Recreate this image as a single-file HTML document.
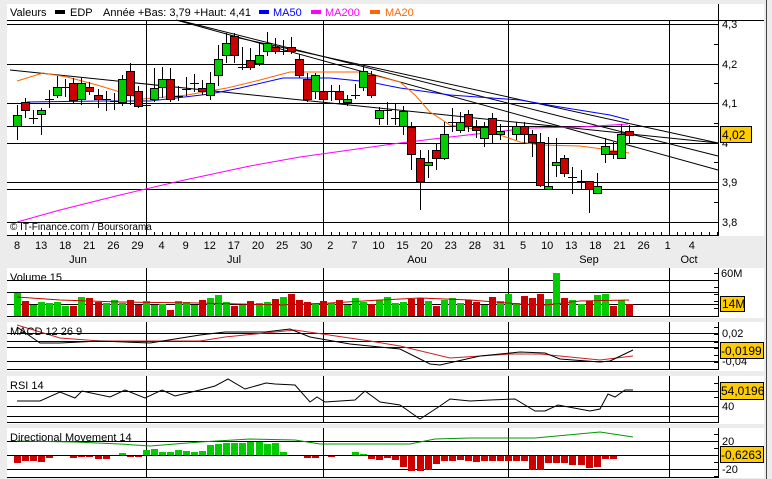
<!DOCTYPE html>
<html><head><meta charset="utf-8">
<style>
html,body{margin:0;padding:0;background:#ececec;}
body{width:772px;height:479px;overflow:hidden;position:relative;font-family:"Liberation Sans",sans-serif;}
svg{position:absolute;left:0;top:0;}
text{font-family:"Liberation Sans",sans-serif;font-size:11px;fill:#000;}
</style></head><body>
<svg id="s" width="772" height="479" viewBox="0 0 772 479" xmlns="http://www.w3.org/2000/svg" shape-rendering="crispEdges">
<rect x="0" y="0" width="772" height="479" fill="#ececec"/>
<line x1="766.5" y1="0" x2="766.5" y2="479" stroke="#444"/>
<rect x="7" y="4" width="757" height="232" fill="#fff"/>
<rect x="7" y="268" width="757" height="50" fill="#fff"/>
<rect x="7" y="322" width="757" height="49" fill="#fff"/>
<rect x="7" y="376" width="757" height="48" fill="#fff"/>
<rect x="7" y="428" width="757" height="50" fill="#fff"/>
<g id="grid" stroke="#e2e2e2" stroke-width="1"></g>
<g id="main"></g>
<text x="10" y="16">Valeurs</text>
<rect x="55" y="10" width="10" height="4" fill="#000"/><text x="70" y="16">EDP</text>
<text x="103" y="16">Année +Bas: 3,79 +Haut: 4,41</text>
<rect x="259" y="10" width="10" height="4" fill="#0000ff"/><text x="273" y="16" style="fill:#0000ff">MA50</text>
<rect x="311" y="10" width="10" height="4" fill="#ff00ff"/><text x="325" y="16" style="fill:#ff00ff">MA200</text>
<rect x="370" y="10" width="10" height="4" fill="#ff6600"/><text x="385" y="16" style="fill:#ff6600">MA20</text>
<text x="10" y="230" style="font-size:10px">© IT-Finance.com / Boursorama</text>
<text x="10" y="281">Volume 15</text>
<text x="10" y="335">MACD 12 26 9</text>
<text x="10" y="389">RSI 14</text>
<text x="10" y="441">Directional Movement 14</text>
<g id="labels"></g>
</svg>
<script>
var NS="http://www.w3.org/2000/svg";
function el(p,t,a){var e=document.createElementNS(NS,t);for(var k in a)e.setAttribute(k,a[k]);document.getElementById(p).appendChild(e);return e;}
function line(p,x1,y1,x2,y2,c,w){return el(p,'line',{x1:x1,y1:y1,x2:x2,y2:y2,stroke:c||'#000','stroke-width':w||1});}
function poly(p,pts,c){el(p,'polyline',{points:pts.map(function(q){return q.join(',')}).join(' '),fill:'none',stroke:c,'stroke-width':1,'shape-rendering':'auto'});}
function txt(p,x,y,s,extra){var t=el(p,'text',Object.assign({x:x,y:y},extra||{}));t.textContent=s;return t;}
function X(i){return 17+8.05*i;}
[146,323,508,669].forEach(function(x){[[20,236],[268,316],[322,370],[376,422],[428,477]].forEach(function(r){line('grid',x+.5,r[0],x+.5,r[1]);});});
[24,64,103,143,182,222].forEach(function(y){line('grid',7,y+.5,718,y+.5);});
[[280,292,304],[333,347,361],[391,406],[441,469]].forEach(function(a){a.forEach(function(y){line('grid',7,y+.5,718,y+.5);});});
line('main',7,20.5,764,20.5,'#000');
line('main',7,126.5,718,126.5,'#000');
line('main',7,189.5,718,189.5,'#000');
el('main','g',{id:'tl','shape-rendering':'auto'});
line('tl',176,20,718,170,'#000');line('tl',182,21,718,156,'#000');line('tl',10,70,718,143,'#000');line('tl',230,36,718,143,'#000');
poly('main',[[17,222],[60,210],[120,195],[180,181],[250,166],[300,157],[350,150],[400,143],[450,137],[530,128],[580,127],[628,124]],'#ff00ff');
poly('main',[[27,102],[100,101],[150,101],[210,94],[240,88],[283,78],[330,78],[370,82],[400,88],[450,95],[520,100],[560,107],[610,115],[629,120]],'#0000ff');
poly('main',[[17,81],[43,73],[67,77],[97,85],[120,92],[143,99],[187,95],[227,88],[260,80],[290,72],[333,72],[360,72],[400,82],[415,95],[430,112],[450,125],[480,130],[500,135],[520,142],[540,145],[580,146],[610,150],[629,153]],'#ff6600');
var C=[['g',115,126,105,140],['r',102,110,98,118],['d',118,118,110,124],['g',110,114,108,135],['d',99,99,90,108],['g',87,95,76,98],['d',87,87,79,97],['r',83,100,78,103],['g',83,99,78,105],['r',87,91,82,95],['r',95,99,89,108],['d',99,99,91,111],['d',101,101,93,110],['g',79,102,75,106],['r',71,95,63,105],['r',91,106,86,108],['d',105,105,98,108],['g',88,99,68,102],['g',79,87,67,98],['r',79,99,68,102],['d',96,96,86,101],['d',89,89,77,96],['d',83,83,74,92],['r',88,91,80,95],['g',83,95,72,100],['g',59,75,45,86],['g',43,55,33,63],['r',36,55,33,63],['d',67,67,47,70],['r',60,67,48,70],['g',55,63,43,66],['g',43,51,32,56],['r',47,51,38,54],['d',51,51,40,55],['r',47,51,37,54],['r',59,75,54,78],['r',79,99,73,102],['g',75,91,73,99],['r',91,99,84,102],['d',91,91,85,101],['r',91,99,85,103],['g',99,102,95,106],['d',95,95,84,99],['g',71,87,66,91],['r',75,95,71,98],['g',110,118,107,125],['d',110,110,102,125],['d',118,118,104,125],['g',111,126,106,135],['r',127,154,122,170],['r',158,181,150,210],['g',162,165,150,178],['r',150,158,143,170],['g',134,158,122,160],['d',122,122,108,132],['g',122,130,112,133],['r',114,126,110,132],['r',127,130,120,138],['g',127,138,122,147],['r',118,134,113,143],['g',131,134,124,140],['d',126,126,121,133],['g',126,134,122,140],['r',126,134,122,144],['r',134,142,130,157],['r',142,185,133,187],['g',186,189,137,190],['g',162,165,138,177],['r',158,173,155,177],['d',177,177,167,194],['d',181,181,170,189],['r',181,189,181,213],['g',186,193,173,193],['g',146,154,138,163],['r',151,154,142,159],['g',134,158,124,159],['r',131,135,125,143]];
var GR='#00cc00',RD='#cc0000';
C.forEach(function(c,i){var x=Math.round(X(i));line('main',x+.5,c[3],x+.5,c[4],'#000');
 if(c[0]=='d'){line('main',x-4,c[1]+.5,x+5,c[1]+.5,'#000');}
 else el('main','rect',{x:x-3.5,y:c[1]+.5,width:8,height:Math.max(2,c[2]-c[1]),fill:c[0]=='g'?GR:RD,stroke:'#000'});});
line('main',718.5,4,718.5,236,'#000');
for(var y=24;y<=230;y+=19.75){line('main',714,Math.round(y)+.5,718,Math.round(y)+.5,'#000');}
[['4,3',24],['4,2',64],['4,1',103],['4',143],['3,9',182],['3,8',222]].forEach(function(a){txt('labels',722,a[1]+4,a[0]);});
el('labels','rect',{x:720.5,y:126.5,width:31,height:16,fill:'#ffcc00',stroke:'#000'});txt('labels',722,139,'4,02',{style:'font-size:12px'});
line('main',7,235.5,718,235.5,'#000');
for(var i=0;i<88;i++){var x=Math.round(X(i))+.5;if(x<718)line('main',x,232,x,236,'#000');}
var D=['8','13','18','21','26','29','4','9','12','17','20','25','30','2','7','10','15','20','23','28','31','5','10','13','18','21','26','1','4'];
D.forEach(function(d,i){txt('labels',17+24.1*i,249,d,{'text-anchor':'middle'});});
[['Jun',78],['Jul',234],['Aou',417],['Sep',589],['Oct',689]].forEach(function(a){txt('labels',a[1],263,a[0],{'text-anchor':'middle'});});
var V=[293,301,305,302,303,302,306,306,297,298,302,303,300,303,300,305,301,305,304,310,301,302,305,300,298,295,302,306,305,301,303,302,299,297,294,300,302,304,301,303,300,305,298,302,304,300,297,303,302,299,298,301,306,300,298,303,300,302,305,297,301,294,303,296,298,294,299,273,298,300,304,301,295,294,306,300,304];
V.forEach(function(v,i){var x=Math.round(X(i));el('main','rect',{x:x-3,y:v,width:7,height:316-v,fill:C[i][0]=='r'?RD:GR});});
poly('main',[[17,297],[60,300],[120,302],[200,303],[280,305],[330,303],[380,300],[420,298],[470,300],[520,304],[545,305],[580,301],[629,300]],'#cc0000');
line('main',7,316.5,718,316.5,'#000');line('main',718.5,268,718.5,317,'#000');
[273,280,287,294,301,308].forEach(function(y){line('main',714,y+.5,718,y+.5,'#000');});
txt('labels',721,277,'60M');el('labels','rect',{x:720.5,y:296.5,width:24,height:15,fill:'#ffcc00',stroke:'#000'});txt('labels',722,308,'14M',{style:'font-size:12px'});
line('main',7,341.5,718,341.5,'#000');line('main',7,369.5,718,369.5,'#000');line('main',718.5,322,718.5,370,'#000');
[327,334,342,348,355,362].forEach(function(y){line('main',714,y+.5,718,y+.5,'#000');});
poly('main',[[17,325],[60,338],[100,341],[200,341],[225,337],[295,330],[370,341],[400,346],[450,358],[510,354],[540,354],[600,360],[633,356]],'#cc2222');
poly('main',[[17,327],[40,343],[60,343],[100,341],[150,343],[200,335],[225,332],[265,332],[290,329],[310,337],[350,344],[400,349],[430,364],[440,365],[480,356],[520,352],[545,353],[560,359],[600,362],[610,361],[633,350]],'#000');
txt('labels',722,337,'0,02');txt('labels',722,365,'-0,04');
el('labels','rect',{x:720.5,y:342.5,width:43,height:16,fill:'#ffcc00',stroke:'#000'});txt('labels',721,355,'-0,0199',{style:'font-size:12px'});
line('main',7,416.5,718,416.5,'#000');line('main',7,422.5,718,422.5,'#000');line('main',718.5,376,718.5,423,'#000');
[383,397,406].forEach(function(y){line('main',714,y+.5,718,y+.5,'#000');});
poly('main',[[17,401],[40,401],[60,392],[75,398],[82,391],[110,397],[125,390],[145,398],[162,390],[175,396],[200,390],[215,386],[228,379],[245,389],[266,383],[275,384],[295,385],[310,402],[317,397],[325,402],[355,400],[365,391],[380,402],[400,405],[420,419],[440,406],[450,399],[470,401],[490,400],[515,399],[535,411],[545,411],[558,405],[590,411],[600,409],[608,394],[615,397],[625,390],[633,390]],'#000');
txt('labels',722,410,'40');el('labels','rect',{x:720.5,y:382.5,width:43,height:17,fill:'#ffcc00',stroke:'#000'});txt('labels',721,395,'54,0196',{style:'font-size:12px'});
var M=[-8,-6,-6,-7,-3,-1,-1,-3,-2,-2,-4,-4,-1,2,-2,-2,5,6,3,3,5,4,3,4,10,11,12,12,12,13,13,11,12,3,-1,-1,-3,-3,-1,-2,0,0,3,1,-4,-5,-3,-5,-12,-16,-16,-15,-9,-6,-6,-5,-6,-7,-6,-6,-6,-6,-6,-6,-15,-15,-8,-8,-8,-10,-10,-13,-12,-4,-4,-1,-1];
M.forEach(function(m,i){var x=Math.round(X(i));if(m==0)return;el('main','rect',{x:x-3,y:m>0?455-m:455,width:7,height:Math.abs(m),fill:m>0?GR:RD});});
poly('main',[[17,441],[75,442],[120,444],[150,446],[200,442],[250,439],[295,440],[320,444],[410,444],[435,439],[470,438],[535,438],[600,432],[633,437]],'#009900');
line('main',7,455.5,718,455.5,'#000');line('main',7,477.5,718,477.5,'#000');line('main',718.5,428,718.5,478,'#000');
[434,441,448,462,469,476].forEach(function(y){line('main',714,y+.5,718,y+.5,'#000');});
txt('labels',722,445,'20');txt('labels',722,473,'-20');
el('labels','rect',{x:720.5,y:446.5,width:43,height:16,fill:'#ffcc00',stroke:'#000'});txt('labels',721,459,'-0,6263',{style:'font-size:12px'});
</script>
</body></html>
